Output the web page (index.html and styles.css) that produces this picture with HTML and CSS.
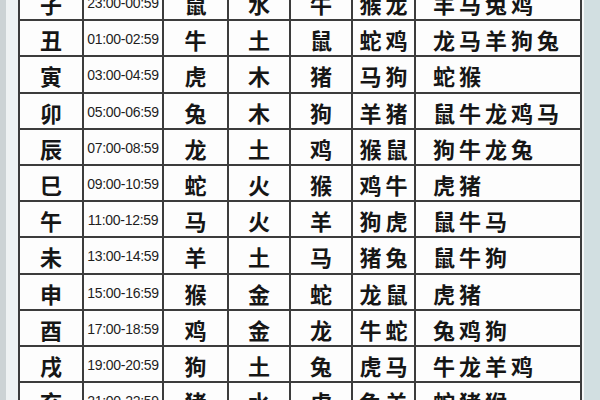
FILE: index.html
```html
<!DOCTYPE html>
<html lang="zh-CN">
<head>
<meta charset="utf-8">
<title>十二时辰</title>
<link rel="stylesheet" href="styles.css">
</head>
<body>
<div class="page">
  <div class="edge-left"></div>
  <div class="gutter-left"></div>
  <div class="sheet">
    <div class="grid">
      <div class="c">子</div><div class="c t">23:00-00:59</div><div class="c">鼠</div><div class="c">水</div><div class="c">牛</div><div class="c">猴龙</div><div class="c l">羊马兔鸡</div>
      <div class="c">丑</div><div class="c t">01:00-02:59</div><div class="c">牛</div><div class="c">土</div><div class="c">鼠</div><div class="c">蛇鸡</div><div class="c l">龙马羊狗兔</div>
      <div class="c">寅</div><div class="c t">03:00-04:59</div><div class="c">虎</div><div class="c">木</div><div class="c">猪</div><div class="c">马狗</div><div class="c l">蛇猴</div>
      <div class="c">卯</div><div class="c t">05:00-06:59</div><div class="c">兔</div><div class="c">木</div><div class="c">狗</div><div class="c">羊猪</div><div class="c l">鼠牛龙鸡马</div>
      <div class="c">辰</div><div class="c t">07:00-08:59</div><div class="c">龙</div><div class="c">土</div><div class="c">鸡</div><div class="c">猴鼠</div><div class="c l">狗牛龙兔</div>
      <div class="c">巳</div><div class="c t">09:00-10:59</div><div class="c">蛇</div><div class="c">火</div><div class="c">猴</div><div class="c">鸡牛</div><div class="c l">虎猪</div>
      <div class="c">午</div><div class="c t">11:00-12:59</div><div class="c">马</div><div class="c">火</div><div class="c">羊</div><div class="c">狗虎</div><div class="c l">鼠牛马</div>
      <div class="c">未</div><div class="c t">13:00-14:59</div><div class="c">羊</div><div class="c">土</div><div class="c">马</div><div class="c">猪兔</div><div class="c l">鼠牛狗</div>
      <div class="c">申</div><div class="c t">15:00-16:59</div><div class="c">猴</div><div class="c">金</div><div class="c">蛇</div><div class="c">龙鼠</div><div class="c l">虎猪</div>
      <div class="c">酉</div><div class="c t">17:00-18:59</div><div class="c">鸡</div><div class="c">金</div><div class="c">龙</div><div class="c">牛蛇</div><div class="c l">兔鸡狗</div>
      <div class="c">戌</div><div class="c t">19:00-20:59</div><div class="c">狗</div><div class="c">土</div><div class="c">兔</div><div class="c">虎马</div><div class="c l">牛龙羊鸡</div>
      <div class="c">亥</div><div class="c t">21:00-22:59</div><div class="c">猪</div><div class="c">水</div><div class="c">虎</div><div class="c">兔羊</div><div class="c l">蛇猪猴</div>
    </div>
  </div>
  <div class="gutter-right"></div>
  <div class="edge-right"></div>
</div>
</body>
</html>
```
FILE: styles.css
```css
html, body {
  margin: 0;
  padding: 0;
  width: 600px;
  height: 400px;
  overflow: hidden;
  background: #ffffff;
}
.page {
  display: flex;
  width: 600px;
  height: 400px;
  overflow: hidden;
}
.edge-left {
  width: 6px;
  flex: none;
  background: #ccd3d5;
}
.gutter-left {
  width: 12px;
  flex: none;
  background: #eef2f3;
}
.sheet {
  flex: none;
  background: #fdfdfd;
  overflow: hidden;
}
.grid {
  display: grid;
  grid-template-columns: 64px 80px 65px 62px 62px 63px 166px;
  grid-auto-rows: 36.2px;
  margin-top: -15px;
  border-right: 2px solid #3c3c3c;
}
.c {
  box-sizing: border-box;
  border-left: 2px solid #3c3c3c;
  border-bottom: 2px solid #3c3c3c;
  display: flex;
  align-items: center;
  justify-content: center;
  padding-top: 2px;
  font-family: "Noto Sans CJK SC", "Noto Sans", sans-serif;
  font-weight: 600;
  font-size: 22px;
  color: #161616;
  letter-spacing: 4px;
  text-indent: 4px;
  white-space: nowrap;
}
.c.t {
  font-family: "Liberation Sans", Arial, sans-serif;
  font-weight: 400;
  font-size: 14px;
  letter-spacing: -0.3px;
  text-indent: 0;
  color: #1e1e1e;
}
.c.l {
  justify-content: flex-start;
  padding-left: 17px;
  text-indent: 0;
}
.gutter-right {
  width: 2px;
  flex: none;
  background: #f6f8f8;
}
.edge-right {
  flex: 1;
  background: #d2dfe1;
}
```
